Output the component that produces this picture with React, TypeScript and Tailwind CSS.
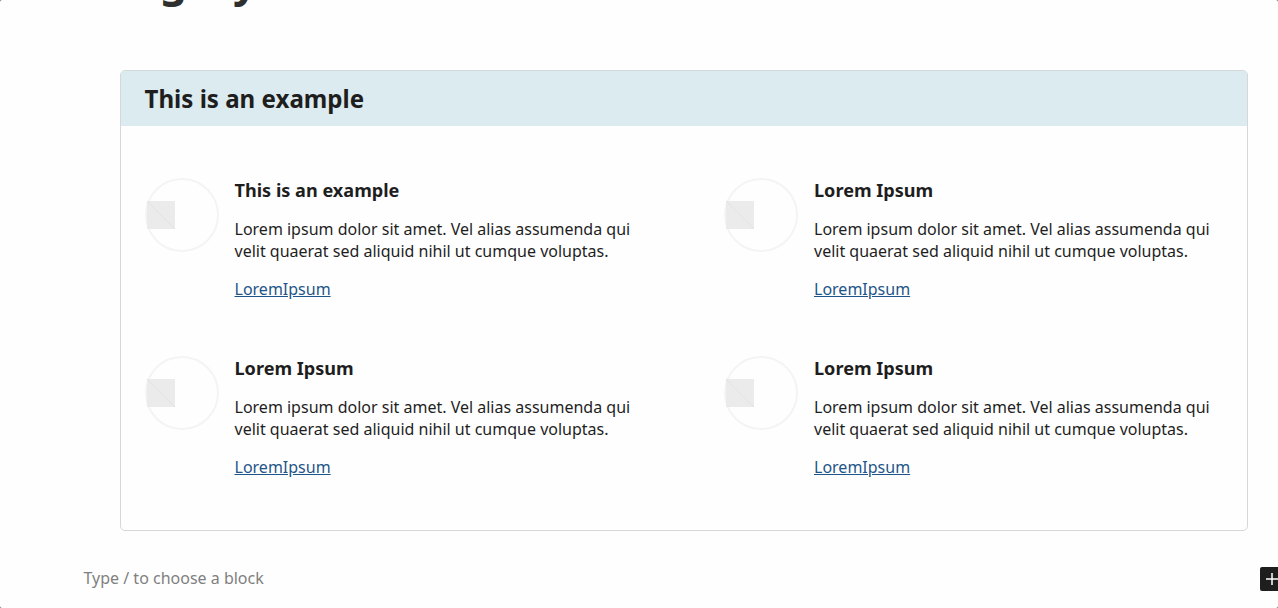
import React from "react";

const items = ["This is an example", "Lorem Ipsum", "Lorem Ipsum", "Lorem Ipsum"];

function Thumb() {
  return (
    <div className="mt-px grid h-[74px] w-[74px] shrink-0 items-center">
      <div className="col-start-1 row-start-1 h-[74px] w-[74px] rounded-full border-2 border-[#f4f4f4]" />
      <svg className="col-start-1 row-start-1 ml-[2px]" width="28" height="28" viewBox="0 0 28 28">
        <rect width="28" height="28" fill="#ebebeb" />
        <path d="M0 0L28 28" stroke="#dedede" strokeWidth="0.7" />
      </svg>
    </div>
  );
}

export default function App() {
  return (
    <div className="bg-[#666]">
      <div className="h-[608px] overflow-hidden rounded-[2px] bg-[#fefefe] font-['Noto_Sans',sans-serif] text-[#1e1e1e]">
        <div className="flex h-[70px] items-start pl-[62px]">
          <h1 className="-mt-[47px] text-[43px] leading-[56px] font-bold whitespace-nowrap text-[#2f2f2f]">Category</h1>
        </div>
        <section className="ml-[120px] h-[461px] w-[1128px] overflow-hidden rounded-[5px] border border-[#d5d8d8]">
          <h2 className="h-[55px] bg-[#dcebf0] pl-[23.5px] text-[24.1px] leading-[56px] font-bold">This is an example</h2>
          <div className="grid grid-cols-[579px_500px] pt-[51px] pl-6">
            {items.map((title, i) => (
              <article key={i} className="flex h-[178px] gap-[15.5px] even:gap-4">
                <Thumb />
                <div className="whitespace-nowrap">
                  <h3 className="text-[18.1px] leading-[26px] font-bold">{title}</h3>
                  <p className="mt-[15px] text-[16px] leading-[22px]">
                    Lorem ipsum dolor sit amet. Vel alias assumenda qui
                    <br />
                    velit quaerat sed aliquid nihil ut cumque voluptas.
                  </p>
                  <a className="mt-4 block text-[16px] leading-[22px] text-[#1f5588] underline">LoremIpsum</a>
                </div>
              </article>
            ))}
          </div>
        </section>
        <div className="mt-9 flex justify-between pl-[83.5px]">
          <p className="text-[16px] leading-[22px] text-[#808080]">Type / to choose a block</p>
          <button className="flex h-6 w-[18px] shrink-0 items-center overflow-hidden rounded-l-[2px] bg-[#1e1e1e]" aria-label="Add block">
            <svg width="24" height="24" viewBox="0 0 24 24" className="shrink-0">
              <path d="M12 6v12M6 12h12" stroke="white" strokeWidth="1.5" />
            </svg>
          </button>
        </div>
      </div>
    </div>
  );
}
